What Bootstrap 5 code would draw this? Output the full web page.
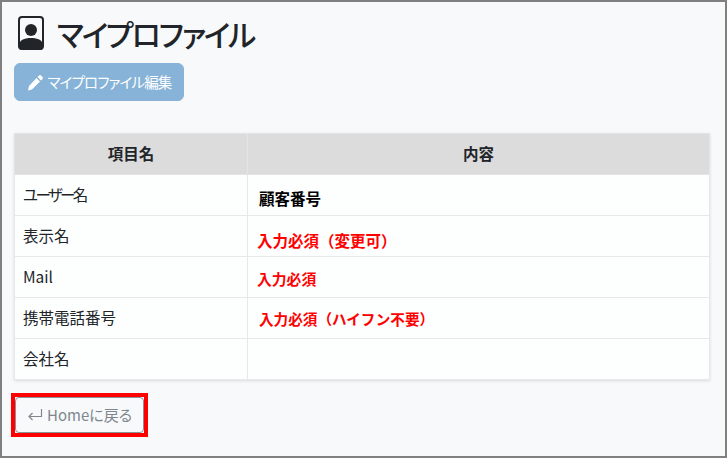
<!DOCTYPE html>
<html lang="ja">
<head>
  <meta charset="UTF-8" />
  <meta name="viewport" content="width=device-width, initial-scale=1.0"/>
  <title>マイプロファイル</title>
  <link href="https://cdn.jsdelivr.net/npm/bootstrap@5.3.3/dist/css/bootstrap.min.css" rel="stylesheet">
  <style>
    body {
      margin: 0;
      background: #f8f9fa;
      font-family: "Noto Sans CJK JP", "Noto Sans", sans-serif;
      font-feature-settings: "palt";
      color: #212529;
    }

    .page-frame {
      height: 458px;
      border: 2px solid #808080;
      padding: 12px 15px 0 12px;
      overflow: hidden;
    }

    .page-title {
      font-size: 30px;
      font-weight: 500;
      line-height: 38px;
      margin: 0 0 11px;
      gap: 13px;
      padding-left: 4px;
      letter-spacing: -2.1px;
    }

    .btn-edit {
      width: 170px;
      height: 38px;
      background: #86b3d7;
      border-color: #86b3d7;
      color: #fff;
      font-size: 14.5px;
      letter-spacing: -.85px;
      padding: 0;
      gap: 4px;
      white-space: nowrap;
    }

    .profile-table {
      margin: 32px 0 0;
      width: 696px;
      table-layout: fixed;
      background: #fff;
      box-shadow: 0 1px 3px rgba(0, 0, 0, .12);
      font-size: 15.5px;
    }

    .profile-table th,
    .profile-table td {
      height: 41px;
      padding: 0 8px;
      border: 1px solid #e6e8ea;
      vertical-align: middle;
      background: #fdfefe;
    }

    .profile-table thead th {
      background: #dcdcdc;
      border-color: #e4e4e4;
      text-align: center;
      font-weight: 700;
    }

    .col-label { width: 233px; }

    .row-label { padding-bottom: 1px !important; }

    .kana-tight { letter-spacing: -2.6px; }

    .val-text {
      display: block;
      font-weight: 700;
      color: #000;
      font-size: 15.5px;
    }

    .val-need {
      color: #f00;
      font-feature-settings: normal;
    }

    .shift-a { padding: 7px 0 0 3px; }
    .shift-b { padding: 9px 0 0 1px; font-size: 15.5px; }
    .shift-c { padding: 4px 0 0 1px; font-size: 14.8px; }
    .shift-d { padding: 1px 0 0 3px; font-size: 14.6px; }

    .back-wrap {
      display: inline-block;
      margin: 13px 0 0 -3px;
      border: 4px solid #f00;
    }

    .btn-home {
      display: flex;
      align-items: center;
      width: 129px;
      height: 36px;
      padding: 0 0 0 11px;
      gap: 4px;
      background: #f8f9fa;
      border: 1px solid #8a9299;
      border-radius: 4px;
      color: #7e878f;
      font-size: 15px;
    }
  </style>
</head>
<body>
  <div class="page-frame">
    <h1 class="page-title d-flex align-items-center">
      <svg width="26" height="34" viewBox="0 0 26 34" aria-hidden="true">
        <rect x="1" y="1" width="24" height="32" rx="3" fill="none" stroke="#212529" stroke-width="2"/>
        <circle cx="13" cy="14" r="6" fill="#212529"/>
        <path d="M1 30c0-6 5-8 12-8s12 2 12 8v1a3 3 0 0 1-3 3H4a3 3 0 0 1-3-3z" fill="#212529"/>
      </svg>
      マイプロファイル
    </h1>

    <a href="#" class="btn btn-edit d-inline-flex align-items-center justify-content-center">
      <svg width="17" height="17" viewBox="0 0 17 17" aria-hidden="true">
        <path d="M12 1.500a1.500 1.500 0 0 1 2 0l1.500 1.500a1.500 1.500 0 0 1 0 2l-1.500 1.500-3.500-3.500zM9.500 4l3.500 3.500L5 15.500l-4 1 1-4.500z" fill="#fff"/>
      </svg>
      マイプロファイル編集
    </a>

    <table class="table profile-table">
      <thead>
        <tr>
          <th class="col-label">項目名</th>
          <th>内容</th>
        </tr>
      </thead>
      <tbody>
        <tr>
          <td class="row-label kana-tight">ユーザー名</td>
          <td><span class="val-text shift-a">顧客番号</span></td>
        </tr>
        <tr>
          <td class="row-label">表示名</td>
          <td><span class="val-text val-need shift-b">入力必須（変更可）</span></td>
        </tr>
        <tr>
          <td class="row-label">Mail</td>
          <td><span class="val-text val-need shift-c">入力必須</span></td>
        </tr>
        <tr>
          <td class="row-label">携帯電話番号</td>
          <td><span class="val-text val-need shift-d">入力必須（ハイフン不要）</span></td>
        </tr>
        <tr>
          <td class="row-label">会社名</td>
          <td></td>
        </tr>
      </tbody>
    </table>

    <div class="back-wrap">
      <a href="#" class="btn-home text-decoration-none">
        <svg width="16" height="14" viewBox="0 0 16 14" aria-hidden="true">
          <path d="M14.500 1v7.500H2M5.500 5L2 8.500 5.500 12" fill="none" stroke="#7e878f" stroke-width="1.200"/>
        </svg>
        Homeに戻る
      </a>
    </div>
  </div>
  <script src="https://cdn.jsdelivr.net/npm/bootstrap@5.3.3/dist/js/bootstrap.bundle.min.js"></script>
</body>
</html>
